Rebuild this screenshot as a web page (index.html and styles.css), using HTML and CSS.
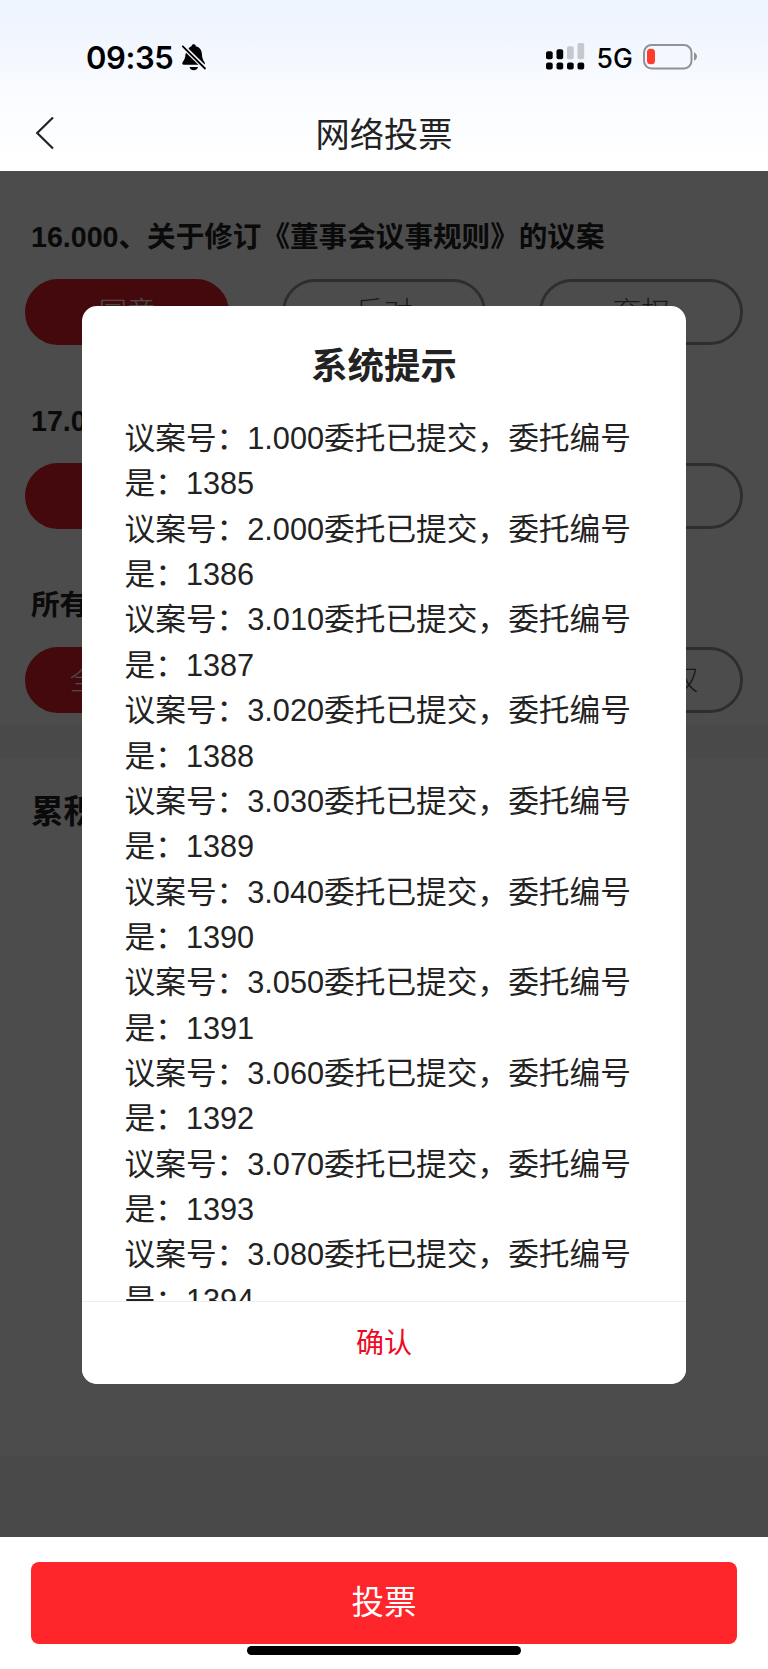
FILE: index.html
```html
<!DOCTYPE html>
<html lang="zh-CN">
<head>
<meta charset="utf-8">
<title>网络投票</title>
<link rel="stylesheet" href="styles.css">
</head>
<body>
<div class="screen">
  <header class="header">
    <div class="status">
      <div class="status-left">
        <span class="clock">09:35</span>
        <svg class="bell" width="26" height="28" viewBox="0 0 26 28">
          <path d="M7.2 5.2C8 3.400 9.300 2.500 10.600 2.200C10.700 .9 11.600 .3 12.700 .3S14.700 .9 14.800 2.200C18.600 3.100 20.700 6 20.900 10C21 14.200 22.200 16.300 23.500 18.300Q24.500 20 23.500 20.800H2.500Q.6 20.400 1.400 18.600C3 16.200 4.400 14.200 4.500 10Z" fill="#000"/>
          <path d="M8.500 23H17C16.300 25.200 14.800 26.200 12.700 26.200S9.200 25.200 8.500 23Z" fill="#000"/>
          <path d="M1 1.500L25 25" stroke="#f5f8fe" stroke-width="4.600"/>
          <path d="M1.300 1.800L24.500 25" stroke="#000" stroke-width="1.800"/>
        </svg>
      </div>
      <div class="status-right">
        <svg class="signal" width="39" height="28" viewBox="0 0 39 28">
          <g fill="#000">
            <rect x="0" y="8.300" width="6.700" height="8" rx="2"/>
            <rect x="10.500" y="6.200" width="6.700" height="10.100" rx="2"/>
            <rect x="0" y="19.600" width="6.700" height="7" rx="2"/>
            <rect x="10.500" y="19.600" width="6.700" height="7" rx="2"/>
            <rect x="21" y="19.600" width="6.700" height="7" rx="2"/>
            <rect x="31.500" y="19.600" width="6.700" height="7" rx="2"/>
          </g>
          <g fill="#c5c8ce">
            <rect x="21" y="3.200" width="6.700" height="13.100" rx="2"/>
            <rect x="31.500" y="0" width="6.700" height="16.300" rx="2"/>
          </g>
        </svg>
        <span class="network">5G</span>
        <svg class="battery" width="55" height="26" viewBox="0 0 55 26">
          <rect x="1" y="1" width="47.500" height="23.400" rx="7.500" fill="none" stroke="#909296" stroke-width="2"/>
          <rect x="4" y="4.700" width="8" height="15.600" rx="3.600" fill="#ff3b30"/>
          <path d="M51 8.600C52.800 9.200 54 10.700 54 12.600S52.800 16 51 16.600Z" fill="#909296"/>
        </svg>
      </div>
    </div>
    <div class="navbar">
      <svg class="back" width="20" height="34" viewBox="0 0 20 34"><path d="M18 1.500L2.200 17L18 32.500" fill="none" stroke="#222" stroke-width="2.200"/></svg>
      <h1 class="page-title">网络投票</h1>
    </div>
  </header>

  <main class="content">
    <section class="proposal">
      <h2 class="label">16.000、关于修订《董事会议事规则》的议案</h2>
      <div class="options"><span class="option on">同意</span><span class="option">反对</span><span class="option">弃权</span></div>
    </section>
    <section class="proposal">
      <h2 class="label">17.000、</h2>
      <div class="options"><span class="option on"></span><span class="option"></span><span class="option"></span></div>
    </section>
    <section class="proposal">
      <h2 class="label">所有</h2>
      <div class="options"><span class="option on">全部同意</span><span class="option"></span><span class="option">全部弃权</span></div>
    </section>
    <div class="band"></div>
    <h2 class="group-title">累积</h2>
    <div class="rest"></div>
    <div class="overlay"></div>
  </main>

  <footer class="footer">
    <button class="submit">投票</button>
    <div class="home-bar"></div>
  </footer>

  <div class="modal">
    <h2 class="modal-title">系统提示</h2>
    <div class="modal-body">
      <p>议案号：1.000委托已提交，委托编号<br>是：1385</p>
      <p>议案号：2.000委托已提交，委托编号<br>是：1386</p>
      <p>议案号：3.010委托已提交，委托编号<br>是：1387</p>
      <p>议案号：3.020委托已提交，委托编号<br>是：1388</p>
      <p>议案号：3.030委托已提交，委托编号<br>是：1389</p>
      <p>议案号：3.040委托已提交，委托编号<br>是：1390</p>
      <p>议案号：3.050委托已提交，委托编号<br>是：1391</p>
      <p>议案号：3.060委托已提交，委托编号<br>是：1392</p>
      <p>议案号：3.070委托已提交，委托编号<br>是：1393</p>
      <p>议案号：3.080委托已提交，委托编号<br>是：1394</p>
    </div>
    <button class="confirm">确认</button>
  </div>
</div>
</body>
</html>
```
FILE: styles.css
```css
* { box-sizing: border-box; margin: 0; padding: 0; }
body {
  font-family: "Liberation Sans", "Noto Sans CJK SC", sans-serif;
  color: #222;
  background: #fff;
}
button { border: 0; font-family: inherit; }
svg { display: block; flex: none; }
.screen {
  position: relative;
  display: flex;
  flex-direction: column;
  width: 768px;
  height: 1669px;
  overflow: hidden;
}

.header {
  height: 171px;
  background: linear-gradient(#edf5fe 0, #f0f5fe 30px, #f9fbff 90px, #fff 160px);
}
.status {
  display: flex;
  justify-content: space-between;
  height: 97px;
  padding: 43px 70px 0 86px;
  font-family: Inter, sans-serif;
  color: #000;
}
.status-left, .status-right { display: flex; align-items: flex-start; }
.clock { width: 95px; font-size: 31px; line-height: 29px; font-weight: 600; letter-spacing: -.4px; white-space: nowrap; }
.bell { margin-top: 1px; }
.network { width: 46.500px; margin-left: 12px; font-size: 26.500px; line-height: 31px; font-weight: 500; white-space: nowrap; }
.battery { margin-top: 1px; }
.navbar {
  display: grid;
  grid-template-columns: 1fr auto 1fr;
  align-items: center;
  height: 72px;
  padding: 0 35px;
}
.page-title { padding-top: 3px; font-size: 34.200px; line-height: 50px; font-weight: 400; }

.content {
  position: relative;
  display: flex;
  flex-direction: column;
  height: 1366px;
  background: #fff;
}
.overlay { position: absolute; inset: 0; background: rgba(0, 0, 0, .7); }
.proposal { height: 184px; padding: 45px 25px 0; }
.label { height: 63px; padding-left: 6px; font-size: 28.600px; line-height: 42px; font-weight: 700; white-space: nowrap; }
.options { display: flex; justify-content: space-between; }
.option {
  width: 204px;
  height: 66px;
  border: 3px solid #999;
  border-radius: 33px;
  font-size: 28.600px;
  line-height: 61px;
  font-weight: 300;
  text-align: center;
  color: #555;
}
.option.on { border-color: #df2128; background: #df2128; color: #fff; }
.band { height: 33px; margin-top: 2px; background: #f4f4f4; }
.group-title { flex: 1; padding: 30px 31px; font-size: 32.500px; line-height: 48px; }
.rest { height: 81px; background: #f4f4f4; }

.footer { height: 132px; padding: 25px 31px 0; background: #fff; }
.submit {
  display: block;
  width: 706px;
  height: 82px;
  padding-bottom: 8px;
  border-radius: 8px;
  background: #ff262b;
  color: #fff;
  font-size: 32.500px;
}
.home-bar { width: 274px; height: 9px; margin: 2px auto 0; border-radius: 5px; background: #000; }

.modal {
  position: absolute;
  left: 82px;
  top: 306px;
  display: flex;
  flex-direction: column;
  width: 604px;
  height: 1078px;
  border-radius: 15px;
  background: #fff;
}
.modal-title { height: 110px; padding-top: 35px; font-size: 36.400px; line-height: 52px; font-weight: 700; text-align: center; }
.modal-body {
  height: 885px;
  padding-left: 42.500px;
  overflow: hidden;
  font-size: 30.700px;
  line-height: 45.360px;
  white-space: nowrap;
}
.confirm {
  flex: 1;
  padding-bottom: 4px;
  border-top: 1px solid #eee;
  border-radius: 0 0 15px 15px;
  background: #fff;
  color: #ee0a24;
  font-size: 28px;
}
```
